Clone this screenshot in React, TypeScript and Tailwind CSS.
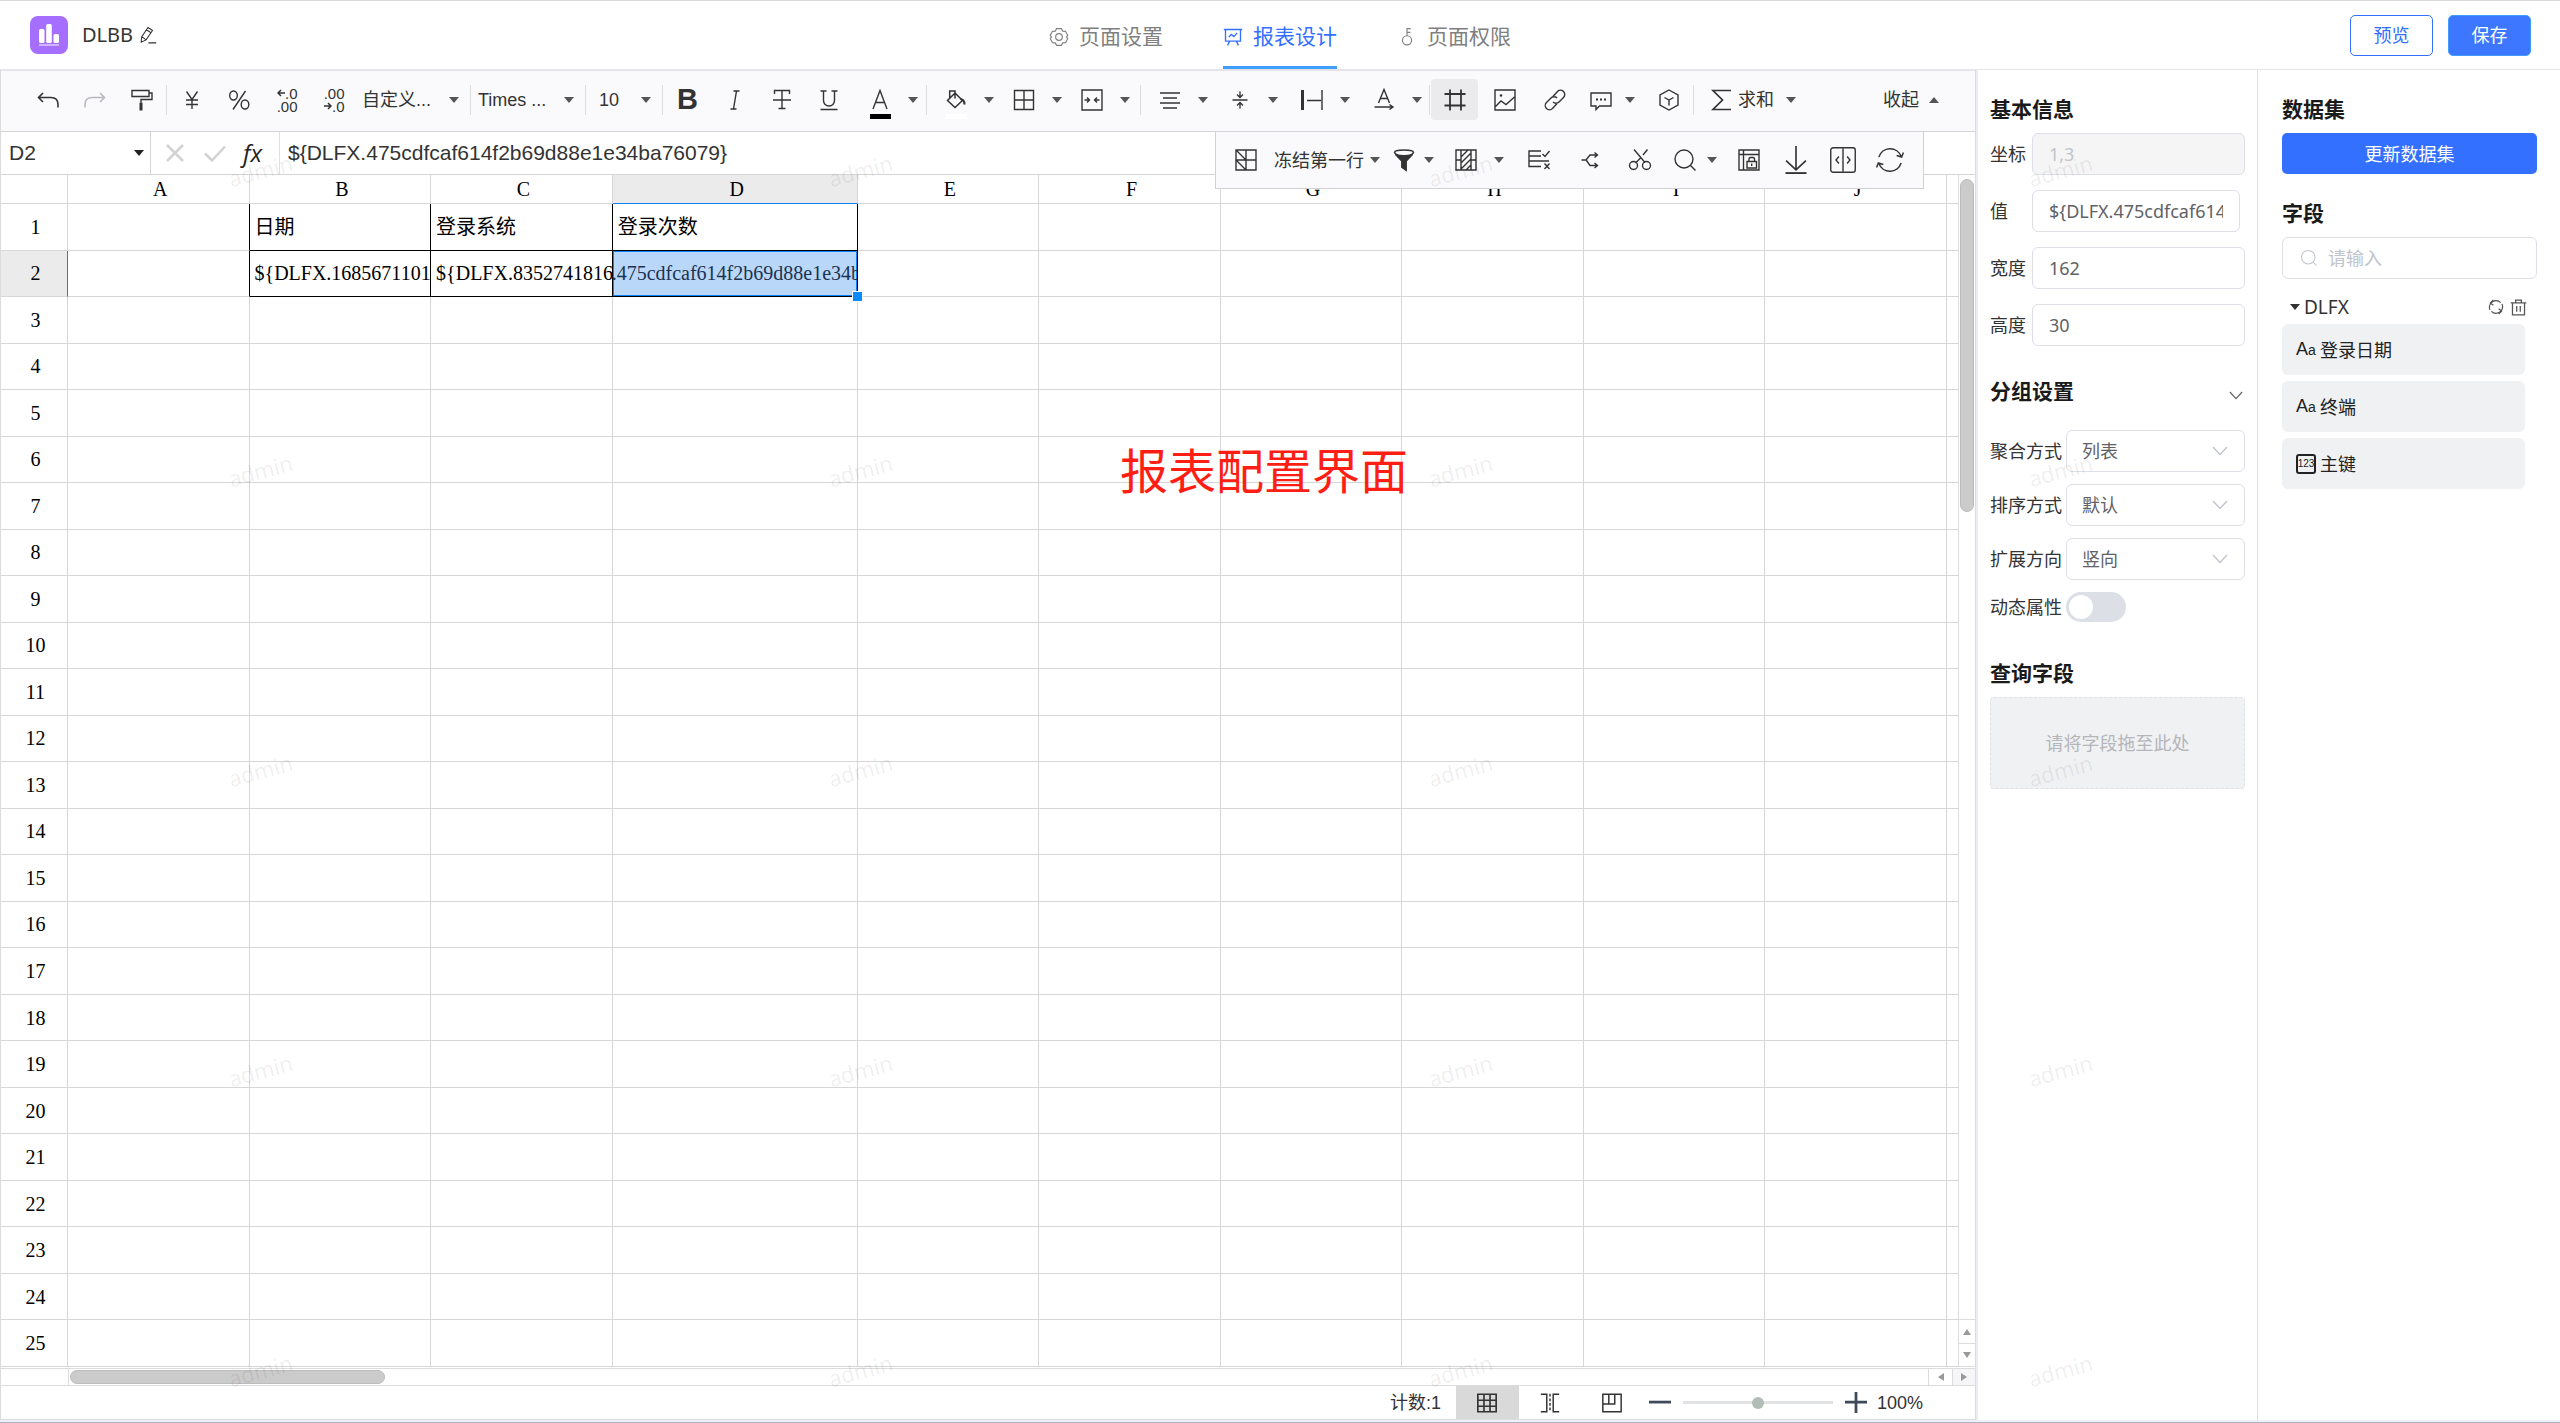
import React, { useState } from "react";

type IconProps = { children: React.ReactNode; className?: string; sw?: number };

function Icon({ children, className = "size-6", sw = 1.4 }: IconProps) {
  return (
    <svg
      viewBox="0 0 24 24"
      fill="none"
      stroke="currentColor"
      strokeWidth={sw}
      className={`shrink-0 ${className}`}
      aria-hidden="true"
    >
      {children}
    </svg>
  );
}

function Caret({ up = false, className = "text-[#555]" }: { up?: boolean; className?: string }) {
  return (
    <svg viewBox="0 0 10 6" className={`h-1.5 w-2.5 shrink-0 ${className}`} fill="currentColor" aria-hidden="true">
      <path d={up ? "M0 6 5 0l5 6z" : "M0 0h10L5 6z"} />
    </svg>
  );
}

function Chevron({ className }: { className: string }) {
  return (
    <svg viewBox="0 0 16 10" className={className} fill="none" stroke="currentColor" strokeWidth="1.4" aria-hidden="true">
      <path d="M1 1l7 7.5L15 1" />
    </svg>
  );
}

const icons = {
  undo: (
    <Icon sw={1.6}>
      <path d="M7 5 2.500 9.500 7 14M2.500 9.500H15q7 0 7 7v3" />
    </Icon>
  ),
  redo: (
    <Icon sw={1.6}>
      <path d="M17 5l4.500 4.500L17 14M21.500 9.500H9q-7 0-7 7v3" />
    </Icon>
  ),
  painter: (
    <Icon>
      <path d="M2 2.500h17v6H2zM19 5h3v6.500H11v3" />
      <path d="M11 14.500v8" strokeWidth="3" />
    </Icon>
  ),
  yen: (
    <Icon>
      <path d="m6.500 3.500 5.500 8 5.500-8M12 11.500v9.500M6 12h12M6 16.500h12" />
    </Icon>
  ),
  percent: (
    <Icon>
      <ellipse cx="6.500" cy="7.500" rx="3.800" ry="4.500" />
      <ellipse cx="18" cy="16.500" rx="3.800" ry="4.500" />
      <path d="M18.500 3 6 21.500" />
    </Icon>
  ),
  strike: (
    <Icon>
      <path d="M4.500 6V2.500h15V6M3 12h18M12 2.500v18M8.500 20.500h7" />
    </Icon>
  ),
  italic: (
    <Icon>
      <path d="M10.500 3h6M7.500 21h6M13.500 3l-3 18" />
    </Icon>
  ),
  underline: (
    <Icon>
      <path d="M3.500 3h6M14.500 3h6M6.500 3v9.500a5.500 5.500 0 0 0 11 0V3M3.500 21.500h17" />
    </Icon>
  ),
  fill: (
    <Icon sw={1.5}>
      <path d="M11 5l7.500 7.500-7.500 7L3.500 12.500zM5.700 10V3H11v7.500" />
      <path d="M16.500 11q4 .5 4 5.500" strokeWidth="2.200" />
    </Icon>
  ),
  borders: (
    <Icon>
      <path d="M2.500 2.500h19v19h-19zM12 2.500v19M2.500 12h19" />
    </Icon>
  ),
  merge: (
    <Icon>
      <path d="M2 2h20v20H2zM4.500 12h5M7 9.500 9.500 12 7 14.500M19.500 12h-5M17 9.500 14.500 12l2.500 2.500" />
    </Icon>
  ),
  alignCenter: (
    <Icon>
      <path d="M2 5h20M5 10h14M2 15h20M5 20h14" />
    </Icon>
  ),
  vAlign: (
    <Icon>
      <path d="M4.500 12h15M12 3.500V9M9 6.500l3 3 3-3M12 20.500V15M9 17.500l3-3 3 3" />
    </Icon>
  ),
  wrap: (
    <Icon>
      <path d="M2.500 2v20" strokeWidth="3" />
      <path d="M22 2v20M7 12.500h14" />
    </Icon>
  ),
  rotate: (
    <Icon>
      <path d="M6.500 15 12 1.500 17.500 15M8.300 10.500h7.400M2.500 19h18.500M17.500 16.500 21 19l-3.500 2.500" />
    </Icon>
  ),
  frame: (
    <Icon sw={1.8}>
      <path d="M7 1.500v21M18 1.500v21M1.500 6h21M1.500 17.500h21" />
    </Icon>
  ),
  image: (
    <Icon>
      <path d="M2 2h20v20H2zM2.500 18.500 8 13l5 3.500 8.500-7.500" />
      <circle cx="8" cy="7.500" r="1.300" fill="currentColor" stroke="none" />
    </Icon>
  ),
  link: (
    <Icon>
      <path d="m10 8.500 4.500-5a4.200 4.200 0 0 1 6 6L16 14a4.200 4.200 0 0 1-6 0M14 15.500l-4.500 5a4.200 4.200 0 0 1-6-6L8 10a4.200 4.200 0 0 1 6 0" />
    </Icon>
  ),
  comment: (
    <Icon>
      <path d="M2 5h20v13H10.500L7 21.500V18H2z" />
      <path d="M7 11.500h2M11 11.500h2M15 11.500h2" strokeWidth="2" />
    </Icon>
  ),
  cube: (
    <Icon>
      <path d="m12 2 9 5v10l-9 5-9-5V7zM7.500 9.500 12 12l4.500-2.500M12 12v5.500" />
    </Icon>
  ),
  sigma: (
    <Icon sw={1.7}>
      <path d="M21 2.500H3l9.500 9.500L3 21.500h18" />
    </Icon>
  ),
  freeze: (
    <Icon>
      <path d="M2 2h20v20H2zM12 2v20M2 12h20M2 2l10 10M2 12l10 10" />
    </Icon>
  ),
  filter: (
    <Icon sw={1.5}>
      <path d="M2.500 4.500q0-2.500 9.500-2.500t9.500 2.500L14 13v9l-4-3v-6z" />
      <path d="M3.500 6.500Q12 9 20.500 6.500L14 13v9l-4-3v-6z" fill="currentColor" />
    </Icon>
  ),
  hatch: (
    <Icon>
      <path d="M2 2h20v20H2zM7 2v20M17 2v20M2 12h5M17 12h5M7 9l7-7M7 15 17 5M7 21 17 11M12 22l5-5" />
    </Icon>
  ),
  validate: (
    <Icon>
      <path d="M14 3H2v5h12M2 8v5M2 13h20M2 13v5.500h12M15.500 6l2.500 2.500L22.500 3M17.500 15.500l5 5.500M22.500 15.500l-5 5.500" />
    </Icon>
  ),
  branch: (
    <Icon>
      <path d="M3.500 12H8l4-5h7M8.500 12.500l3.500 5h7M16.500 4.500 19.500 7l-3 2.500M16.500 15l3 2.500-3 2.500" />
    </Icon>
  ),
  cut: (
    <Icon>
      <path d="M6 1.500 17 14.500M19.500 1.500 15 7M12.500 10 7.500 15" />
      <circle cx="5.500" cy="17.500" r="4" />
      <circle cx="18.500" cy="17.500" r="4" />
    </Icon>
  ),
  search: (
    <Icon>
      <circle cx="11" cy="11" r="9" />
      <path d="m17.500 17.500 5 5" />
    </Icon>
  ),
  lockTable: (
    <Icon>
      <path d="M2 2h20v20H2zM2 6.500h20M6.500 2v20M10 13.500h9.500v6.500H10zM12 13.500V11q0-1.500 1.500-1.500h2.500q1.500 0 1.500 1.500v2.500M14.700 15.500v2.500" />
    </Icon>
  ),
};

function Sep() {
  return <span className="mx-px h-[30px] w-px shrink-0 bg-[#dcdcdf]" />;
}

function Tool({
  label,
  children,
  className = "w-[47px]",
}: {
  label: string;
  children: React.ReactNode;
  className?: string;
}) {
  return (
    <button
      type="button"
      aria-label={label}
      title={label}
      className={`flex h-[41px] shrink-0 items-center justify-center rounded-sm ${className}`}
    >
      {children}
    </button>
  );
}

function Split({ label, children, className }: { label: string; children: React.ReactNode; className: string }) {
  return (
    <button
      type="button"
      aria-label={label}
      title={label}
      className={`flex h-[41px] shrink-0 items-center gap-4 pl-4 ${className}`}
    >
      {children}
      <Caret />
    </button>
  );
}

function ToolSelect({ label, value, className }: { label: string; value: string; className: string }) {
  return (
    <span className={`relative flex shrink-0 items-center ${className}`}>
      <select
        aria-label={label}
        className="w-full appearance-none bg-transparent font-[inherit] text-lg leading-6 text-[#333] outline-none"
      >
        <option>{value}</option>
      </select>
      <span className="pointer-events-none absolute right-2.5">
        <Caret />
      </span>
    </span>
  );
}

function DecimalIcon({ more }: { more: boolean }) {
  return (
    <span className="flex w-6 flex-col items-end text-[15px] leading-[13px]">
      <span className="flex items-center">
        {more && (
          <svg viewBox="0 0 8 8" className="size-2" fill="none" stroke="currentColor" strokeWidth="1.500">
            <path d="M8 4H1M4 1 1 4l3 3" />
          </svg>
        )}
        {more ? ".0" : ".00"}
      </span>
      <span className="flex items-center">
        {!more && (
          <svg viewBox="0 0 8 8" className="size-2" fill="none" stroke="currentColor" strokeWidth="1.500">
            <path d="M0 4h7M4 1l3 3-3 3" />
          </svg>
        )}
        {more ? ".00" : ".0"}
      </span>
    </span>
  );
}

function Header() {
  const tabs = [
    {
      name: "页面设置",
      icon: (
        <Icon className="size-5">
          <path d="M9 2h6l1.500 3 3.300.2L22.500 10l-1.500 2 1.500 2-2.700 4.800-3.300.2L15 22H9l-1.500-3-3.300-.2L1.500 14 3 12l-1.500-2 2.700-4.800L7.500 5z" />
          <circle cx="12" cy="12" r="4" />
        </Icon>
      ),
    },
    {
      name: "报表设计",
      icon: (
        <Icon className="size-5" sw={1.6}>
          <path d="M1 3h22M3 3v14h18V3M8 17l-2.500 5M16 17l2.500 5M7 12l3-3 3 2.500L17 7" />
        </Icon>
      ),
    },
    {
      name: "页面权限",
      icon: (
        <Icon className="size-5">
          <circle cx="12" cy="16" r="5.500" />
          <path d="M12 10.500V2h4.500M12 6.500h4" />
        </Icon>
      ),
    },
  ];
  return (
    <header className="grid h-[70px] shrink-0 grid-cols-[1fr_auto_1fr] items-center border-t border-b border-t-[#d9d9d9] border-b-[#e6e6ea] bg-white">
      <div className="flex items-center pl-[30px]">
        <span className="flex size-[38px] items-center justify-center rounded-lg bg-[#a56eff]">
          <svg viewBox="0 0 20 22" className="h-[22px] w-5" fill="#fff" aria-hidden="true">
            <rect x="0" y="5" width="5.500" height="14" rx="1.500" />
            <rect x="7.200" y="0" width="5.600" height="19" rx="1.500" />
            <rect x="14.500" y="10" width="5.500" height="9" rx="1.500" />
            <rect x="0" y="20.300" width="20" height="1.400" opacity="0.7" />
          </svg>
        </span>
        <h1 className="ml-[14px] text-xl leading-7 text-[#333]">DLBB</h1>
        <button type="button" aria-label="重命名" className="ml-1.5 text-[#333]">
          <Icon className="size-[18px]">
            <path d="M3 21.500l.5-7L12 2l6 4-8.500 12.500zM10 5l6 4M4 14.500l5.500 4M12.500 22.500H23" />
          </Icon>
        </button>
      </div>
      <nav className="flex h-full gap-[60px]">
        {tabs.map((t, i) => (
          <a
            key={t.name}
            href="#"
            className={
              i === 1
                ? "flex items-center gap-2.5 border-b-[3px] border-b-[#409eff] pt-1.5 text-[21px] text-[#3370ff]"
                : "flex items-center gap-2.5 pt-[3px] text-[21px] text-[#808080]"
            }
          >
            {t.icon}
            {t.name}
          </a>
        ))}
      </nav>
      <div className="flex justify-end gap-[15px] pr-[29px]">
        <button type="button" className="h-[41px] w-[83px] rounded-[5px] border border-[#3370ff] text-lg text-[#3370ff]">
          预览
        </button>
        <button type="button" className="h-[41px] w-[83px] rounded-[5px] border border-[#409eff] bg-[#3d77ff] text-lg text-white">
          保存
        </button>
      </div>
    </header>
  );
}

function Toolbar() {
  return (
    <div className="flex h-[61px] shrink-0 items-center border-t border-[#e3e3e8] bg-[#fafafc] pb-[3px] pl-[23px] font-['Liberation_Sans','Noto_Sans_CJK_SC',sans-serif] text-[#333]">
      <Tool label="撤销">{icons.undo}</Tool>
      <Tool label="重做" className="w-[47px] text-[#b9b9bd]">
        {icons.redo}
      </Tool>
      <Tool label="格式刷">{icons.painter}</Tool>
      <Sep />
      <Tool label="货币">{icons.yen}</Tool>
      <Tool label="百分比">{icons.percent}</Tool>
      <Tool label="增加小数位">
        <DecimalIcon more />
      </Tool>
      <Tool label="减少小数位">
        <DecimalIcon more={false} />
      </Tool>
      <ToolSelect label="数字格式" value="自定义..." className="w-[113px] pl-1.5" />
      <Sep />
      <ToolSelect label="字体" value="Times ..." className="w-28 pl-1.5" />
      <Sep />
      <ToolSelect label="字号" value="10" className="w-[74px] pl-3" />
      <Sep />
      <Tool label="加粗">
        <span className="text-[29px] leading-none font-bold">B</span>
      </Tool>
      <Tool label="斜体">{icons.italic}</Tool>
      <Tool label="删除线">{icons.strike}</Tool>
      <Tool label="下划线">{icons.underline}</Tool>
      <Split label="字体颜色" className="w-[73px]">
        <span className="relative">
          <Icon>
            <path d="M5 21 12 2.500 19 21M7.500 14.500h9" />
          </Icon>
          <span className="absolute top-[26px] left-0.5 h-[5px] w-[21px] bg-black" />
        </span>
      </Split>
      <Sep />
      <Split label="填充颜色" className="w-[68px]">
        <span className="relative">
          {icons.fill}
          <span className="absolute top-[26px] left-0.5 h-[5px] w-[21px] bg-white" />
        </span>
      </Split>
      <Split label="边框" className="w-[68px]">
        {icons.borders}
      </Split>
      <Split label="合并单元格" className="w-[75px]">
        {icons.merge}
      </Split>
      <Sep />
      <Split label="水平对齐" className="w-[70px]">
        {icons.alignCenter}
      </Split>
      <Split label="垂直对齐" className="w-[72px]">
        {icons.vAlign}
      </Split>
      <Split label="文本换行" className="w-[72px]">
        {icons.wrap}
      </Split>
      <Split label="文本旋转" className="w-[72px]">
        {icons.rotate}
      </Split>
      <Sep />
      <div className="flex items-center gap-[3px]">
        <Tool label="网格线" className="w-[47px] bg-[#ebebee]">
          {icons.frame}
        </Tool>
        <Tool label="图片">{icons.image}</Tool>
        <Tool label="链接">{icons.link}</Tool>
        <Tool label="批注" className="w-[61px] justify-start! gap-3 pl-2">
          {icons.comment}
          <Caret />
        </Tool>
        <Tool label="数据透视">{icons.cube}</Tool>
      </div>
      <Sep />
      <Tool label="求和" className="ml-[15px] gap-1 text-lg">
        {icons.sigma}
        <span>求和</span>
        <span className="pl-2">
          <Caret />
        </span>
      </Tool>
      <Tool label="收起" className="mr-9 ml-auto gap-2.5 text-lg">
        <span>收起</span>
        <Caret up />
      </Tool>
    </div>
  );
}

function MoreTools() {
  return (
    <div className="absolute top-0 right-[51px] z-10 flex h-[58px] items-center border border-[#d2d2d6] bg-[#fafafc] pl-1.5 text-[#333]">
      <Tool label="冻结" className="gap-4 pl-3 text-lg">
        {icons.freeze}
        <span className="flex items-center gap-1.5">
          冻结第一行
          <Caret />
        </span>
      </Tool>
      <Tool label="筛选" className="gap-2 pr-1 pl-3">
        {icons.filter}
        <Caret />
      </Tool>
      <Tool label="条件格式" className="gap-4 pr-3 pl-4">
        {icons.hatch}
        <Caret />
      </Tool>
      <Tool label="数据验证" className="w-[46px]">
        {icons.validate}
      </Tool>
      <Tool label="分列" className="w-[56px]">
        {icons.branch}
      </Tool>
      <Tool label="截图" className="w-[43px]">
        {icons.cut}
      </Tool>
      <Tool label="查找" className="gap-2.5 pr-2 pl-3">
        {icons.search}
        <Caret />
      </Tool>
      <Tool label="保护">{icons.lockTable}</Tool>
      <Tool label="下载">
        <Icon className="size-7">
          <path d="M12 0v20M3.500 12.500l8.500 8 8.500-8" />
          <path d="M3 23.200h18" strokeWidth="1.600" />
        </Icon>
      </Tool>
      <Tool label="代码">
        <Icon className="size-7" sw={1.200}>
          <rect x="1.500" y="1.500" width="21" height="21" rx="2" />
          <path d="M12 2v20M8.500 9 6 12l2.500 3M15.500 9l2.500 3-2.500 3" />
        </Icon>
      </Tool>
      <Tool label="刷新" className="mr-2.5 w-[47px]">
        <Icon className="size-7" sw={1.300}>
          <path d="M2.500 9.500A10 10 0 0 1 21.500 9M21.500 14.500A10 10 0 0 1 2.500 15M23.500 5.500l-1.500 4-4.300-1.300M.5 18.500l1.500-4 4.300 1.300" />
        </Icon>
      </Tool>
    </div>
  );
}

function FormulaBar() {
  return (
    <div className="flex h-11 shrink-0 items-center border-t border-b border-[#d4d4d4] bg-white font-['Liberation_Sans','Noto_Sans_CJK_SC',sans-serif]">
      <div className="flex h-full w-[150px] items-center border-r border-[#d4d4d4] pr-1.5">
        <input aria-label="名称框" defaultValue="D2" className="w-full min-w-0 pl-2 text-[21px] text-[#333] outline-none" />
        <Caret className="text-[#222]" />
      </div>
      <div className="flex h-full w-[129px] items-center gap-4 border-r border-[#e0e0e0] pl-3">
        <button type="button" aria-label="取消" className="text-[#d2d2d2]">
          <Icon sw={2.5}>
            <path d="M4 4l16 16M20 4 4 20" />
          </Icon>
        </button>
        <button type="button" aria-label="确认" className="text-[#d2d2d2]">
          <Icon sw={2.5}>
            <path d="M2 12.500l7 7L22 5.500" />
          </Icon>
        </button>
        <button
          type="button"
          aria-label="插入函数"
          className="font-['Open_Sans',sans-serif] text-[24px] leading-7 text-[#222] italic"
        >
          fx
        </button>
      </div>
      <input
        aria-label="公式"
        defaultValue="${DLFX.475cdfcaf614f2b69d88e1e34ba76079}"
        className="min-w-0 flex-1 pl-2 text-[21px] text-[#333] outline-none"
      />
    </div>
  );
}

const columns = ["A", "B", "C", "D", "E", "F", "G", "H", "I", "J"];
const rows = Array.from({ length: 25 }, (_, i) => i + 1);
const cells: Record<string, string> = {
  B1: "日期",
  C1: "登录系统",
  D1: "登录次数",
  B2: "${DLFX.1685671101",
  C2: "${DLFX.8352741816",
  D2: "${DLFX.475cdfcaf614f2b69d88e1e34ba76079}",
};

function cellBorder(col: string, row: number) {
  const inBox = row <= 2 && (col === "B" || col === "C" || col === "D");
  if (inBox) return "border-r border-b border-black";
  if (row <= 2 && col === "A") return "border-r border-b border-r-black border-b-[#d6d6d6]";
  return "border-r border-b border-[#d6d6d6]";
}

function Sheet() {
  return (
    <div className="relative min-h-0 min-w-0 flex-1 overflow-hidden">
      <table className="h-full w-full table-fixed border-separate border-spacing-0 font-['Liberation_Serif','Noto_Sans_CJK_SC',serif] text-xl leading-6 text-black">
        <colgroup>
          <col className="w-[67px]" />
          {columns.map((c) => (
            <col key={c} className={c === "D" ? "w-[245px]" : undefined} />
          ))}
          <col className="w-[11px]" />
        </colgroup>
        <thead>
          <tr className="h-[29px]">
            <th className="border-r border-b border-[#d6d6d6]" />
            {columns.map((c) => (
              <th
                key={c}
                scope="col"
                className={
                  c === "D"
                    ? "border-r border-b border-r-[#d6d6d6] border-b-[#0a84f5] bg-[#ebebeb] p-0 pl-1 font-normal"
                    : "border-r border-b border-[#d6d6d6] p-0 pl-1 font-normal"
                }
              >
                {c}
              </th>
            ))}
            <th className="border-b border-[#d6d6d6]" />
          </tr>
        </thead>
        <tbody>
          {rows.map((r) => (
            <tr key={r}>
              <th
                scope="row"
                className={
                  r === 2
                    ? "border-r border-b border-r-[#0a84f5] border-b-[#d6d6d6] bg-[#ebebeb] p-0 pl-[3px] font-normal"
                    : "border-r border-b border-[#d6d6d6] p-0 pl-[3px] font-normal"
                }
              >
                {r}
              </th>
              {columns.map((c) => {
                const text = cells[c + r];
                if (c === "D" && r === 2) {
                  return (
                    <td
                      key={c}
                      className="relative border-r border-b border-black bg-[#b9d7f9] p-0 text-[#1b3350] shadow-[inset_0_0_0_1px_#0a84f5]"
                    >
                      <div className="flex items-center justify-center overflow-hidden">
                        <span className="shrink-0">{text}</span>
                      </div>
                      <span className="absolute -right-1.5 -bottom-1.5 size-[11px] border border-white bg-[#0a8aff]" />
                    </td>
                  );
                }
                return (
                  <td key={c} className={`${cellBorder(c, r)} overflow-hidden p-0 pl-[5px] text-left whitespace-nowrap`}>
                    {text}
                  </td>
                );
              })}
              <td className="border-b border-[#d6d6d6] p-0" />
            </tr>
          ))}
        </tbody>
      </table>
      <p className="pointer-events-none absolute top-[272px] left-[1119px] text-[48px] leading-[48px] whitespace-nowrap text-[#ff1e14]">
        报表配置界面
      </p>
    </div>
  );
}

function Arrow({ d }: { d: string }) {
  return (
    <svg viewBox="0 0 8 8" className="size-2" fill="#999" aria-hidden="true">
      <path d={d} />
    </svg>
  );
}

function StatusBar() {
  const [zoom, setZoom] = useState(50);
  return (
    <div className="flex h-[34px] shrink-0 items-center justify-end border-b border-[#dedede] bg-white pr-[52px] font-['Liberation_Sans','Noto_Sans_CJK_SC',sans-serif] text-lg leading-6 text-[#333]">
      <span className="mr-[15px]">计数:1</span>
      <Tool label="普通视图" className="h-[33px]! w-[63px] rounded-none! bg-[#d9d9d9]">
        <Icon className="size-[22px]">
          <path d="M2 2.500h20v19H2zM8.700 2.500v19M15.300 2.500v19M2 9h20M2 15.500h20" strokeWidth="1.800" />
        </Icon>
      </Tool>
      <Tool label="分页预览" className="w-[62px]">
        <Icon className="size-[22px]" sw={1.6}>
          <path d="M2 2.500h6.500v19H2M22 2.500h-6.500v19H22" />
          <path d="M12 2v20" strokeDasharray="3 2" />
        </Icon>
      </Tool>
      <Tool label="页面布局" className="w-[62px]">
        <Icon className="size-[22px]" sw={1.6}>
          <path d="M2 2.500h20v19H2zM2 13h13V2.500M8.500 2.500V13" />
        </Icon>
      </Tool>
      <button type="button" aria-label="缩小" className="mx-1.5 flex w-[22px] justify-center text-[#3e4a59]">
        <Icon className="size-[22px]" sw={3}>
          <path d="M0 11h24" />
        </Icon>
      </button>
      <input
        type="range"
        aria-label="缩放"
        min={0}
        max={100}
        value={zoom}
        onChange={(e) => setZoom(Number(e.target.value))}
        className="mx-1.5 h-[3px] w-[150px] appearance-none bg-[#e0e2e6] outline-none [&::-webkit-slider-thumb]:size-3 [&::-webkit-slider-thumb]:appearance-none [&::-webkit-slider-thumb]:rounded-full [&::-webkit-slider-thumb]:bg-[#b2bdb8]"
      />
      <button type="button" aria-label="放大" className="mr-2.5 ml-1.5 flex w-[22px] justify-center text-[#3e4a59]">
        <Icon className="size-[22px]" sw={3}>
          <path d="M0 11h24M12 0v23" />
        </Icon>
      </button>
      <span>100%</span>
    </div>
  );
}

function SheetPane() {
  return (
    <section className="flex min-w-0 flex-1 flex-col border-r border-l border-[#dcdcdc]">
      <Toolbar />
      <div className="relative flex min-h-0 flex-1 flex-col">
        <MoreTools />
        <FormulaBar />
        <div className="flex min-h-0 flex-1">
          <Sheet />
          <div className="flex w-[17px] shrink-0 flex-col items-center border-l border-[#dcdcdc]">
            <div className="mt-1 h-[333px] w-3.5 rounded-full border border-[#bcbcbc] bg-[#cbcbcb]" />
            <div className="mt-auto flex h-6 w-full items-center justify-center border-t border-[#dcdcdc]">
              <Arrow d="M0 7 4 1l4 6z" />
            </div>
            <div className="flex h-6 w-full items-center justify-center border-t border-b border-[#dcdcdc]">
              <Arrow d="M0 1h8L4 7z" />
            </div>
          </div>
        </div>
        <div className="mt-px flex h-[18px] shrink-0 items-center border-t border-b border-[#dcdcdc]">
          <div className="ml-[67px] flex h-full flex-1 items-center border-l border-[#dcdcdc] pl-px">
            <div className="h-3.5 w-[315px] rounded-full border border-[#bcbcbc] bg-[#cbcbcb]" />
          </div>
          <div className="flex h-full w-6 items-center justify-center border-l border-[#dcdcdc]">
            <Arrow d="M7 0v8L1 4z" />
          </div>
          <div className="flex h-full w-[23px] items-center justify-center border-l border-[#dcdcdc] bg-[#f6f6f8]">
            <Arrow d="M1 0v8l6-4z" />
          </div>
        </div>
        <StatusBar />
      </div>
    </section>
  );
}

function Title({ children }: { children: React.ReactNode }) {
  return <h2 className="text-[21px] leading-7 font-bold text-[#1a1a1a]">{children}</h2>;
}

function Field({
  id,
  label,
  value,
  disabled = false,
  narrow = false,
}: {
  id: string;
  label: string;
  value: string;
  disabled?: boolean;
  narrow?: boolean;
}) {
  return (
    <div className={`flex items-center ${narrow ? "pr-[5px]" : ""}`}>
      <label htmlFor={id} className="w-[42px] shrink-0 text-lg text-[#333]">
        {label}
      </label>
      <input
        id={id}
        defaultValue={value}
        disabled={disabled}
        className="h-[42px] min-w-0 flex-1 rounded-md border border-[#dcdfe6] bg-white px-4 text-lg text-[#606266] outline-none disabled:bg-[#f5f5f6] disabled:text-[#c0c4cc]"
      />
    </div>
  );
}

function SelectField({ id, label, value }: { id: string; label: string; value: string }) {
  return (
    <div className="flex items-center">
      <label htmlFor={id} className="w-[76px] shrink-0 text-lg text-[#333]">
        {label}
      </label>
      <span className="relative flex min-w-0 flex-1 items-center">
        <select
          id={id}
          className="h-[42px] w-full appearance-none rounded-md border border-[#dcdfe6] bg-white px-[15px] text-lg text-[#606266] outline-none"
        >
          <option>{value}</option>
        </select>
        <Chevron className="pointer-events-none absolute right-[17px] h-2.5 w-4 text-[#c0c4cc]" />
      </span>
    </div>
  );
}

function PropertiesPanel() {
  return (
    <aside className="w-[281px] shrink-0 border-l-2 border-[#e9ecf5] bg-white pt-[25px] pr-3 pl-3">
      <Title>基本信息</Title>
      <div className="mt-2.5 flex flex-col gap-[15px]">
        <Field id="coord" label="坐标" value="1,3" disabled />
        <Field id="value" label="值" value="${DLFX.475cdfcaf614f2b69d88e1e34ba76079}" narrow />
        <Field id="width" label="宽度" value="162" />
        <Field id="height" label="高度" value="30" />
      </div>
      <div className="mt-[31px] flex items-center justify-between pr-0.5">
        <Title>分组设置</Title>
        <button type="button" aria-label="折叠分组设置" className="pt-2">
          <Chevron className="h-[9px] w-3.5 text-[#606266]" />
        </button>
      </div>
      <div className="mt-[25px] flex flex-col gap-3">
        <SelectField id="aggregate" label="聚合方式" value="列表" />
        <SelectField id="sort" label="排序方式" value="默认" />
        <SelectField id="expand" label="扩展方向" value="竖向" />
        <label className="flex h-[30px] items-center text-lg text-[#333]">
          <span className="w-[76px]">动态属性</span>
          <input type="checkbox" role="switch" className="peer sr-only" />
          <span className="flex h-[30px] w-[60px] rounded-full bg-[#dcdfe6] p-[3px] peer-checked:justify-end peer-checked:bg-[#3370ff]">
            <span className="size-6 rounded-full bg-white" />
          </span>
        </label>
      </div>
      <div className="mt-[37px]">
        <Title>查询字段</Title>
        <div className="mt-2.5 flex h-[92px] items-center justify-center rounded-sm border border-dashed border-[#e0e1e4] bg-[#f0f1f3] text-lg text-[#b4b6ba]">
          请将字段拖至此处
        </div>
      </div>
    </aside>
  );
}

function FieldIcon({ numeric }: { numeric: boolean }) {
  if (numeric) {
    return (
      <span className="flex size-5 items-center justify-center rounded-[3px] border-2 border-[#222] font-['Liberation_Sans_Narrow','Liberation_Sans',sans-serif] text-[10px] leading-none text-[#222]">
        123
      </span>
    );
  }
  return (
    <span className="flex w-5 items-baseline font-['Liberation_Sans',sans-serif] text-lg leading-6 text-[#222]">
      A<span className="text-[14px]">a</span>
    </span>
  );
}

function DatasetPanel() {
  const fields = ["登录日期", "终端", "主键"];
  return (
    <aside className="w-[303px] shrink-0 border-l border-[#dfe0e4] bg-white pt-[25px] pr-[23px] pl-6">
      <Title>数据集</Title>
      <button type="button" className="mt-2.5 h-[41px] w-full rounded-[5px] bg-[#3370ff] text-lg text-white">
        更新数据集
      </button>
      <div className="mt-[25px]">
        <Title>字段</Title>
      </div>
      <div className="mt-2.5 flex h-[42px] items-center gap-2.5 rounded-md border border-[#dcdfe6] px-[17px] text-[#c0c4cc]">
        <Icon className="size-[18px]">
          <circle cx="11" cy="11" r="9" />
          <path d="m17.500 17.500 4.500 4.500" />
        </Icon>
        <input
          aria-label="搜索字段"
          placeholder="请输入"
          className="min-w-0 flex-1 text-lg outline-none placeholder:text-[#c0c4cc]"
        />
      </div>
      <div className="mt-[11px] flex h-[34px] items-center pr-2.5 pl-2">
        <Caret className="text-[#333]" />
        <span className="ml-1 flex-1 text-[19px] leading-6 text-[#333]">DLFX</span>
        <button type="button" aria-label="刷新数据集" className="mr-1.5 text-[#555]">
          <Icon className="size-4" sw={1.8}>
            <path d="M3 16.500A10 10 0 0 1 12 2.500q4 0 7 3M21 7.500A10 10 0 0 1 12 21.500q-4 0-7-3M8 1.500 3.500 6 8 9.500M16 14.500l4.500 3.500L16 22.500" />
          </Icon>
        </button>
        <button type="button" aria-label="删除数据集" className="text-[#555]">
          <Icon className="size-[17px]" sw={1.8}>
            <path d="M1 5.500h22M8 5V1.500h8V5M3.500 5.500v17h17v-17M9.500 10v8M14.500 10v8" />
          </Icon>
        </button>
      </div>
      <ul className="flex flex-col gap-1.5 pr-3">
        {fields.map((f, i) => (
          <li key={f} className="flex h-[51px] items-center gap-1 rounded-md bg-[#f0f1f3] pl-[14px] text-lg text-[#222]">
            <FieldIcon numeric={i === 2} />
            {f}
          </li>
        ))}
      </ul>
    </aside>
  );
}

function Watermark() {
  return (
    <div className="pointer-events-none absolute inset-0 z-20 overflow-hidden" aria-hidden="true">
      <div className="mt-5 -ml-[39px] grid auto-rows-[300px] grid-cols-[repeat(4,600px)] place-items-center text-[22px] text-black/8 select-none">
        {Array.from({ length: 20 }, (_, i) => (
          <span key={i} className="-rotate-15 font-['Open_Sans',sans-serif]">
            admin
          </span>
        ))}
      </div>
    </div>
  );
}

export default function App() {
  return (
    <div className="relative flex h-screen flex-col overflow-hidden border-b border-[#aab3bf] bg-white font-['Noto_Sans','Noto_Sans_CJK_SC',sans-serif]">
      <Header />
      <main className="flex min-h-0 flex-1 border-b-2 border-[#eef0f5]">
        <SheetPane />
        <PropertiesPanel />
        <DatasetPanel />
      </main>
      <Watermark />
    </div>
  );
}
